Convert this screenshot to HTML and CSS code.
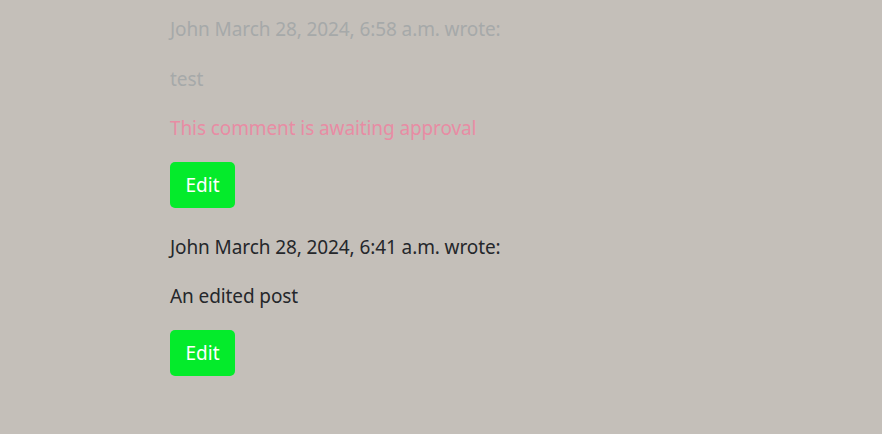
FILE: index.html
```html
<!DOCTYPE html>
<html lang="en">
<head>
<meta charset="utf-8">
<title>Comments</title>
<link rel="stylesheet" href="styles.css">
</head>
<body>
<main class="comments">
  <div class="comment faded">
    <p>John March 28, 2024, 6:58 a.m. wrote:</p>
    <p>test</p>
    <p class="pending">This comment is awaiting approval</p>
    <a class="btn" href="#">Edit</a>
  </div>
  <div class="comment">
    <p>John March 28, 2024, 6:41 a.m. wrote:</p>
    <p>An edited post</p>
    <a class="btn" href="#">Edit</a>
  </div>
</main>
</body>
</html>
```
FILE: styles.css
```css
html, body {
  margin: 0;
  padding: 0;
}
body {
  background: #c4bfb9;
  font-family: "Noto Sans", "Open Sans", sans-serif;
  font-size: 19px;
  letter-spacing: -0.1px;
  font-weight: 400;
  color: #25272b;
}
.comments {
  padding: 15px 0 0 170px;
}
.comment {
  display: flex;
  flex-direction: column;
  align-items: flex-start;
  margin-bottom: 25px;
}
.comment p {
  margin: 0 0 20px;
  line-height: 29.5px;
}
.comment p:last-of-type {
  margin-bottom: 18px;
}
.faded p {
  color: #a6a9a9;
}
.faded p.pending {
  color: #e88ca4;
}
.btn {
  display: inline-block;
  box-sizing: border-box;
  height: 46px;
  width: 65px;
  line-height: 46px;
  text-align: center;
  background: #04eb2b;
  color: #fff;
  border-radius: 5px;
  text-decoration: none;
  font-size: 19px;
  letter-spacing: 0;
}
```
